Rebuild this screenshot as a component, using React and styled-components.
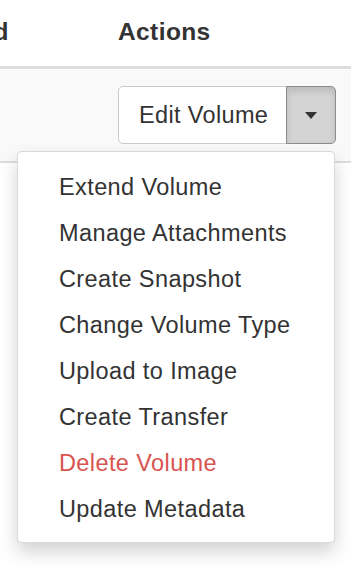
import React from 'react'
import styled, { createGlobalStyle } from 'styled-components'

const GlobalStyle = createGlobalStyle`
  html, body {
    margin: 0;
    padding: 0;
    background: #fff;
  }
  body {
    font-family: "Liberation Sans", Arial, sans-serif;
    color: #333;
    overflow: hidden;
  }
`

const Page = styled.div`
  position: relative;
  width: 356px;
  height: 568px;
`

const Table = styled.div`
  width: 351px;
  overflow: hidden;
`

const Row = styled.div`
  display: grid;
  grid-template-columns: 106px 1fr;
  background: ${props => (props.$striped ? '#f9f9f9' : '#fff')};
  border-bottom: ${props => (props.$head ? '3px' : '2px')} solid #ddd;
`

const HeadCell = styled.div`
  padding: 18px 12px 20px;
  font-size: 24.5px;
  line-height: 28px;
  font-weight: 700;
  letter-spacing: 0.4px;
  white-space: nowrap;
`

const ClippedHeadCell = styled(HeadCell)`
  display: flex;
  justify-content: flex-end;
  overflow: hidden;
  padding-left: 0;
  padding-right: 97px;
`

const Cell = styled.div`
  padding: 17px 12px 17px;
`

const ActionsCell = styled(Cell)`
  position: relative;
`

const ButtonGroup = styled.div`
  display: inline-flex;
  margin-left: -0.5px;
`

const Button = styled.button`
  box-sizing: border-box;
  width: 169px;
  height: 58px;
  font-family: inherit;
  font-size: 23.5px;
  line-height: 32px;
  letter-spacing: 0.35px;
  text-align: left;
  white-space: nowrap;
  color: #333;
  background: #fff;
  border: 1px solid #ccc;
  border-radius: 5px 0 0 5px;
  padding: 12px 0 12px 20.5px;
  margin: 0;
  cursor: pointer;
`

const CaretButton = styled(Button)`
  width: 50px;
  padding: 0;
  display: flex;
  align-items: center;
  justify-content: center;
  background: #d4d4d4;
  border-color: #8c8c8c;
  border-radius: 0 5px 5px 0;
  margin-left: -1px;
  box-shadow: inset 0 4px 7px rgba(0, 0, 0, 0.125);
`

const Caret = styled.span`
  width: 0;
  height: 0;
  border-top: 7px solid #333;
  border-left: 6.5px solid transparent;
  border-right: 6.5px solid transparent;
  margin-top: 1px;
`

const Menu = styled.ul`
  position: absolute;
  top: 151px;
  left: 17px;
  width: 318px;
  box-sizing: border-box;
  margin: 0;
  padding: 12px 0 10px;
  list-style: none;
  background: #fff;
  border: 1px solid rgba(0, 0, 0, 0.15);
  border-radius: 5px;
  box-shadow: 0 9px 18px rgba(0, 0, 0, 0.175);
  z-index: 10;
`

const MenuItem = styled.li`
  padding: 7px 20px 7px 41px;
  font-size: 23.5px;
  line-height: 32px;
  letter-spacing: 0.4px;
  white-space: nowrap;
  color: ${props => (props.$danger ? '#d9534f' : '#333')};
  cursor: pointer;
`

const items = [
  { label: 'Extend Volume' },
  { label: 'Manage Attachments' },
  { label: 'Create Snapshot' },
  { label: 'Change Volume Type' },
  { label: 'Upload to Image' },
  { label: 'Create Transfer' },
  { label: 'Delete Volume', danger: true },
  { label: 'Update Metadata' },
]

const App = () => {
  return (
    <Page>
      <GlobalStyle />
      <Table>
        <Row $head>
          <ClippedHeadCell>Encrypted</ClippedHeadCell>
          <HeadCell>Actions</HeadCell>
        </Row>
        <Row $striped>
          <Cell />
          <ActionsCell>
            <ButtonGroup>
              <Button>Edit Volume</Button>
              <CaretButton aria-label="More actions">
                <Caret />
              </CaretButton>
            </ButtonGroup>
          </ActionsCell>
        </Row>
      </Table>
      <Menu>
        {items.map(item => (
          <MenuItem key={item.label} $danger={item.danger}>
            {item.label}
          </MenuItem>
        ))}
      </Menu>
    </Page>
  )
}

export default App
